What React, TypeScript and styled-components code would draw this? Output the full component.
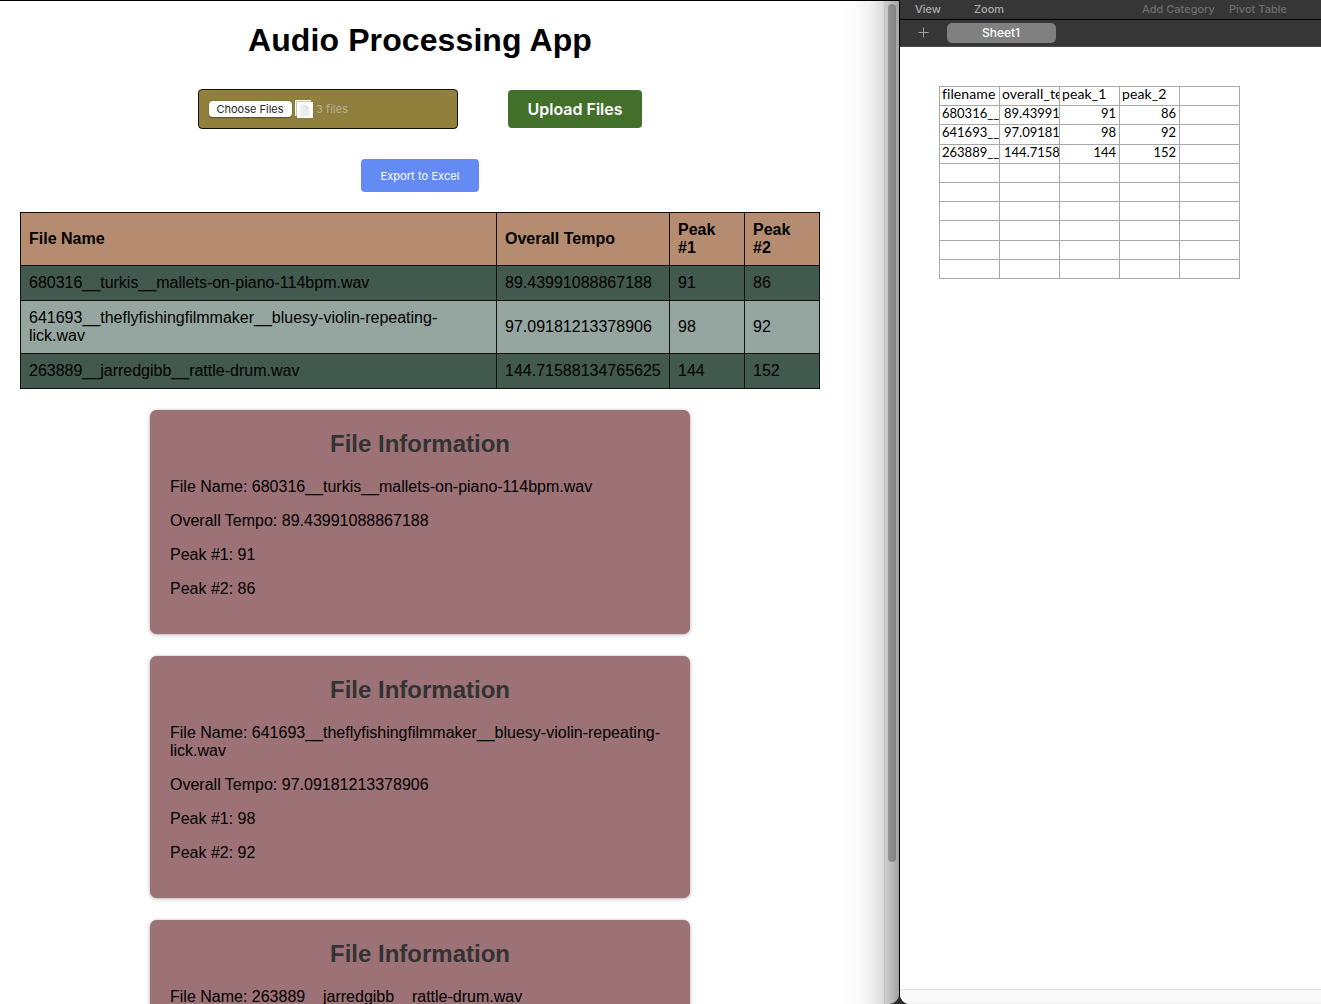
import React from 'react';
import styled, { createGlobalStyle } from 'styled-components';

const Global = createGlobalStyle`
  *, *::before, *::after { box-sizing: border-box; }
  html, body { margin: 0; padding: 0; background: #fff; overflow: hidden; }
`;

const Desktop = styled.div`
  display: flex;
  width: 1321px;
  height: 1004px;
  overflow: hidden;
  background: #2c2b2e;
`;

const BrowserWindow = styled.section`
  position: relative;
  display: flex;
  width: 899px;
  height: 1004px;
  background: #fff;
  border-top: 1px solid #000;
  border-bottom-right-radius: 10px;
  overflow: hidden;
  font-family: 'Liberation Sans', Arial, sans-serif;
  font-size: 16px;
  line-height: 18px;
  color: #000;
`;

const Page = styled.main`
  display: flex;
  flex-direction: column;
  align-items: center;
  width: 840px;
  height: 1003px;
  padding: 21px 20px 0;
  overflow: hidden;
`;

const Title = styled.h1`
  margin: 0;
  font-size: 32px;
  line-height: 37px;
  letter-spacing: 0.1px;
  white-space: nowrap;
`;

const UploadBar = styled.div`
  display: flex;
  align-items: center;
  gap: 50px;
  margin-top: 30px;
  font-family: Inter, sans-serif;
`;

const FilePicker = styled.div`
  display: flex;
  align-items: center;
  width: 260px;
  height: 40px;
  padding: 0 10px;
  background: #90803c;
  border: 1px solid #111;
  border-radius: 4px;
  font-size: 11px;
  line-height: 14px;
`;

const ChooseButton = styled.button`
  width: 83px;
  height: 16px;
  padding: 0 1px 0 0;
  border: 0;
  border-radius: 4px;
  background: #fff;
  box-shadow: 0 0.5px 1.5px rgba(0, 0, 0, 0.4);
  color: #262626;
  font: 400 11px/16px Inter, sans-serif;
  letter-spacing: 0;
  white-space: nowrap;
`;

const StackIcon = styled.svg`
  flex: none;
  margin: 0 3px 0 3px;
`;

const FileCount = styled.span`
  color: #b5aea0;
  letter-spacing: 0.1px;
`;

const UploadButton = styled.button`
  width: 134px;
  height: 38px;
  padding: 0;
  border: 0;
  border-radius: 4px;
  background: #426f2a;
  color: #fff;
  font: 600 16px/38px Inter, sans-serif;
  white-space: nowrap;
`;

const ExportButton = styled.button`
  width: 118px;
  height: 33px;
  margin: 30px 0 20px;
  padding: 1px 0 0;
  border: 0;
  border-radius: 4px;
  background: #638bf3;
  color: #fff;
  font: 400 11px/32px Inter, sans-serif;
  letter-spacing: 0.08px;
  white-space: nowrap;
`;

const ResultTable = styled.table`
  flex: none;
  width: 800px;
  table-layout: fixed;
  border-collapse: collapse;
  text-align: left;
`;

const Cell = styled.td`
  padding: 8px;
  border: 1px solid #111;
`;

const HeadCell = styled(Cell)`
  background: #b58c70;
  font-weight: 700;
`;

const BodyRow = styled.tr<{ $alt: boolean }>`
  background: ${(p) => (p.$alt ? '#95a59f' : '#41594f')};
`;

const Cards = styled.div`
  display: flex;
  flex-direction: column;
  gap: 22px;
  padding-top: 21px;
`;

const Card = styled.article`
  width: 540px;
  padding: 20px 20px 36px;
  background: #9c7276;
  border-radius: 7px;
  box-shadow: 0 0 1px rgba(0, 0, 0, 0.45), 0 1px 4px rgba(0, 0, 0, 0.25);
`;

const CardTitle = styled.h2`
  margin: 0 0 21px;
  color: #333;
  font-size: 24px;
  line-height: 27px;
  text-align: center;
`;

const Fact = styled.p`
  margin: 0;
  & + & { margin-top: 16px; }
`;

const EdgeShade = styled.div`
  position: absolute;
  inset: 0 0 0 auto;
  width: 59px;
  background: linear-gradient(to right, rgba(0,0,0,0) 0%, rgba(0,0,0,0.01) 25%, rgba(0,0,0,0.05) 50%, rgba(0,0,0,0.15) 75%, rgba(0,0,0,0.34) 100%);
`;

const ScrollTrack = styled.div`
  position: absolute;
  inset: 0 0 0 auto;
  width: 15px;
  padding: 3px 4px 0 3px;
  background: rgba(0, 0, 0, 0.03);
  border-left: 1px solid rgba(0, 0, 0, 0.08);
`;

const ScrollThumb = styled.div`
  width: 8px;
  height: 858px;
  border-radius: 4px;
  background: rgba(0, 0, 0, 0.25);
`;

const SheetWindow = styled.section`
  display: flex;
  flex-direction: column;
  width: 422px;
  height: 1004px;
  border-left: 1px solid #000;
  border-bottom-left-radius: 10px;
  background: #fff;
  overflow: hidden;
  font-family: Inter, sans-serif;
`;

const Toolbar = styled.header`
  display: flex;
  flex: none;
  height: 20px;
  padding-left: 15px;
  background: #363636;
  border-bottom: 1px solid #000;
  font-size: 11px;
  font-weight: 500;
  line-height: 18px;
`;

const ToolLabel = styled.span<{ $width: number; $dim?: boolean }>`
  width: ${(p) => p.$width}px;
  color: ${(p) => (p.$dim ? '#6c6c6c' : '#ababab')};
  letter-spacing: 0;
  white-space: nowrap;
`;

const TabBar = styled.nav`
  display: flex;
  flex: none;
  align-items: center;
  height: 27px;
  padding: 0 0 1px 18px;
  gap: 18px;
  background: #363636;
  border-bottom: 1px solid #4a4a4a;
`;

const SheetTab = styled.div`
  width: 109px;
  height: 20px;
  padding-right: 1px;
  border-radius: 5px;
  background: #808080;
  color: #fff;
  font-size: 12px;
  font-weight: 500;
  line-height: 19px;
  text-align: center;
`;

const Canvas = styled.div`
  flex: 1;
  padding: 39px 0 0 39px;
`;

const Grid = styled.div`
  display: grid;
  grid-template-columns: repeat(5, 60px);
  grid-template-rows: 19px 19px 20px 19px 19px 19px 19px 20px 19px 19px;
  width: 301px;
  border-top: 1px solid #a9a9a9;
  border-left: 1px solid #a9a9a9;
`;

const GridCell = styled.div<{ $head: boolean; $right: boolean; $inset: boolean }>`
  padding: 0 3px 0 ${(p) => (p.$inset ? 4 : 2)}px;
  border-right: 1px solid #a9a9a9;
  border-bottom: 1px solid #a9a9a9;
  overflow: hidden;
  color: #000;
  font-family: Lato, sans-serif;
  font-size: ${(p) => (p.$head ? '14px' : '13px')};
  letter-spacing: ${(p) => (p.$head ? '0.1px' : '0')};
  line-height: ${(p) => (p.$head ? '14px' : '15px')};
  text-align: ${(p) => (p.$right ? 'right' : 'left')};
  white-space: nowrap;
`;

const StatusBar = styled.footer`
  flex: none;
  height: 15px;
  background: #f9f9f9;
  border-top: 1px solid #e2e2e2;
  border-bottom: 1px solid #efefef;
`;

const files = [
  { name: '680316__turkis__mallets-on-piano-114bpm.wav', tempo: '89.43991088867188', p1: '91', p2: '86' },
  { name: '641693__theflyfishingfilmmaker__bluesy-violin-repeating-lick.wav', tempo: '97.09181213378906', p1: '98', p2: '92' },
  { name: '263889__jarredgibb__rattle-drum.wav', tempo: '144.71588134765625', p1: '144', p2: '152' },
];

const sheetRows = [
  ['filename', 'overall_te', 'peak_1', 'peak_2', ''],
  ...files.map((f) => [f.name.slice(0, 8), f.tempo.slice(0, 8), f.p1, f.p2, '']),
  ...Array.from({ length: 6 }, () => ['', '', '', '', '']),
];

export default function App() {
  return (
    <>
      <Global />
      <Desktop>
        <BrowserWindow>
          <Page>
            <Title>Audio Processing App</Title>
            <UploadBar>
              <FilePicker>
                <ChooseButton>Choose Files</ChooseButton>
                <StackIcon width="18" height="18" viewBox="0 0 18 18">
                  <path d="M0 16V0h16v1H1v15z" fill="#fff" />
                  <path d="M1 1h15v1H2v14H1z" fill="#c9c4b4" />
                  <path d="M2 2h16v16H2z" fill="#fff" />
                  <path d="M5.5 4.5h5l4 4v8h-9z" fill="#ececec" />
                  <path d="M10.5 4.5v4h4z" fill="#d8d8d8" />
                </StackIcon>
                <FileCount>3 files</FileCount>
              </FilePicker>
              <UploadButton>Upload Files</UploadButton>
            </UploadBar>
            <ExportButton>Export to Excel</ExportButton>
            <ResultTable>
              <colgroup>
                <col style={{ width: 476 }} />
                <col style={{ width: 173 }} />
                <col style={{ width: 75 }} />
                <col style={{ width: 75 }} />
              </colgroup>
              <thead>
                <tr>
                  <HeadCell as="th">File Name</HeadCell>
                  <HeadCell as="th">Overall Tempo</HeadCell>
                  <HeadCell as="th">Peak #1</HeadCell>
                  <HeadCell as="th">Peak #2</HeadCell>
                </tr>
              </thead>
              <tbody>
                {files.map((f, i) => (
                  <BodyRow key={f.name} $alt={i % 2 === 1}>
                    <Cell>{f.name}</Cell>
                    <Cell>{f.tempo}</Cell>
                    <Cell>{f.p1}</Cell>
                    <Cell>{f.p2}</Cell>
                  </BodyRow>
                ))}
              </tbody>
            </ResultTable>
            <Cards>
              {files.map((f) => (
                <Card key={f.name}>
                  <CardTitle>File Information</CardTitle>
                  <Fact>File Name: {f.name}</Fact>
                  <Fact>Overall Tempo: {f.tempo}</Fact>
                  <Fact>Peak #1: {f.p1}</Fact>
                  <Fact>Peak #2: {f.p2}</Fact>
                </Card>
              ))}
            </Cards>
          </Page>
          <EdgeShade />
          <ScrollTrack>
            <ScrollThumb />
          </ScrollTrack>
        </BrowserWindow>
        <SheetWindow>
          <Toolbar>
            <ToolLabel $width={59}>View</ToolLabel>
            <ToolLabel $width={168}>Zoom</ToolLabel>
            <ToolLabel $width={87} $dim>Add Category</ToolLabel>
            <ToolLabel $width={70} $dim>Pivot Table</ToolLabel>
          </Toolbar>
          <TabBar>
            <svg width="11" height="11" viewBox="0 0 11 11">
              <path d="M5.5 .5v10M.5 5.5h10" stroke="#a0a0a0" fill="none" />
            </svg>
            <SheetTab>Sheet1</SheetTab>
          </TabBar>
          <Canvas>
            <Grid>
              {sheetRows.map((row, r) =>
                row.map((text, c) => (
                  <GridCell key={`${r}-${c}`} $head={r === 0} $right={r > 0 && c > 1} $inset={r > 0 && c === 1}>
                    {text}
                  </GridCell>
                ))
              )}
            </Grid>
          </Canvas>
          <StatusBar />
        </SheetWindow>
      </Desktop>
    </>
  );
}
